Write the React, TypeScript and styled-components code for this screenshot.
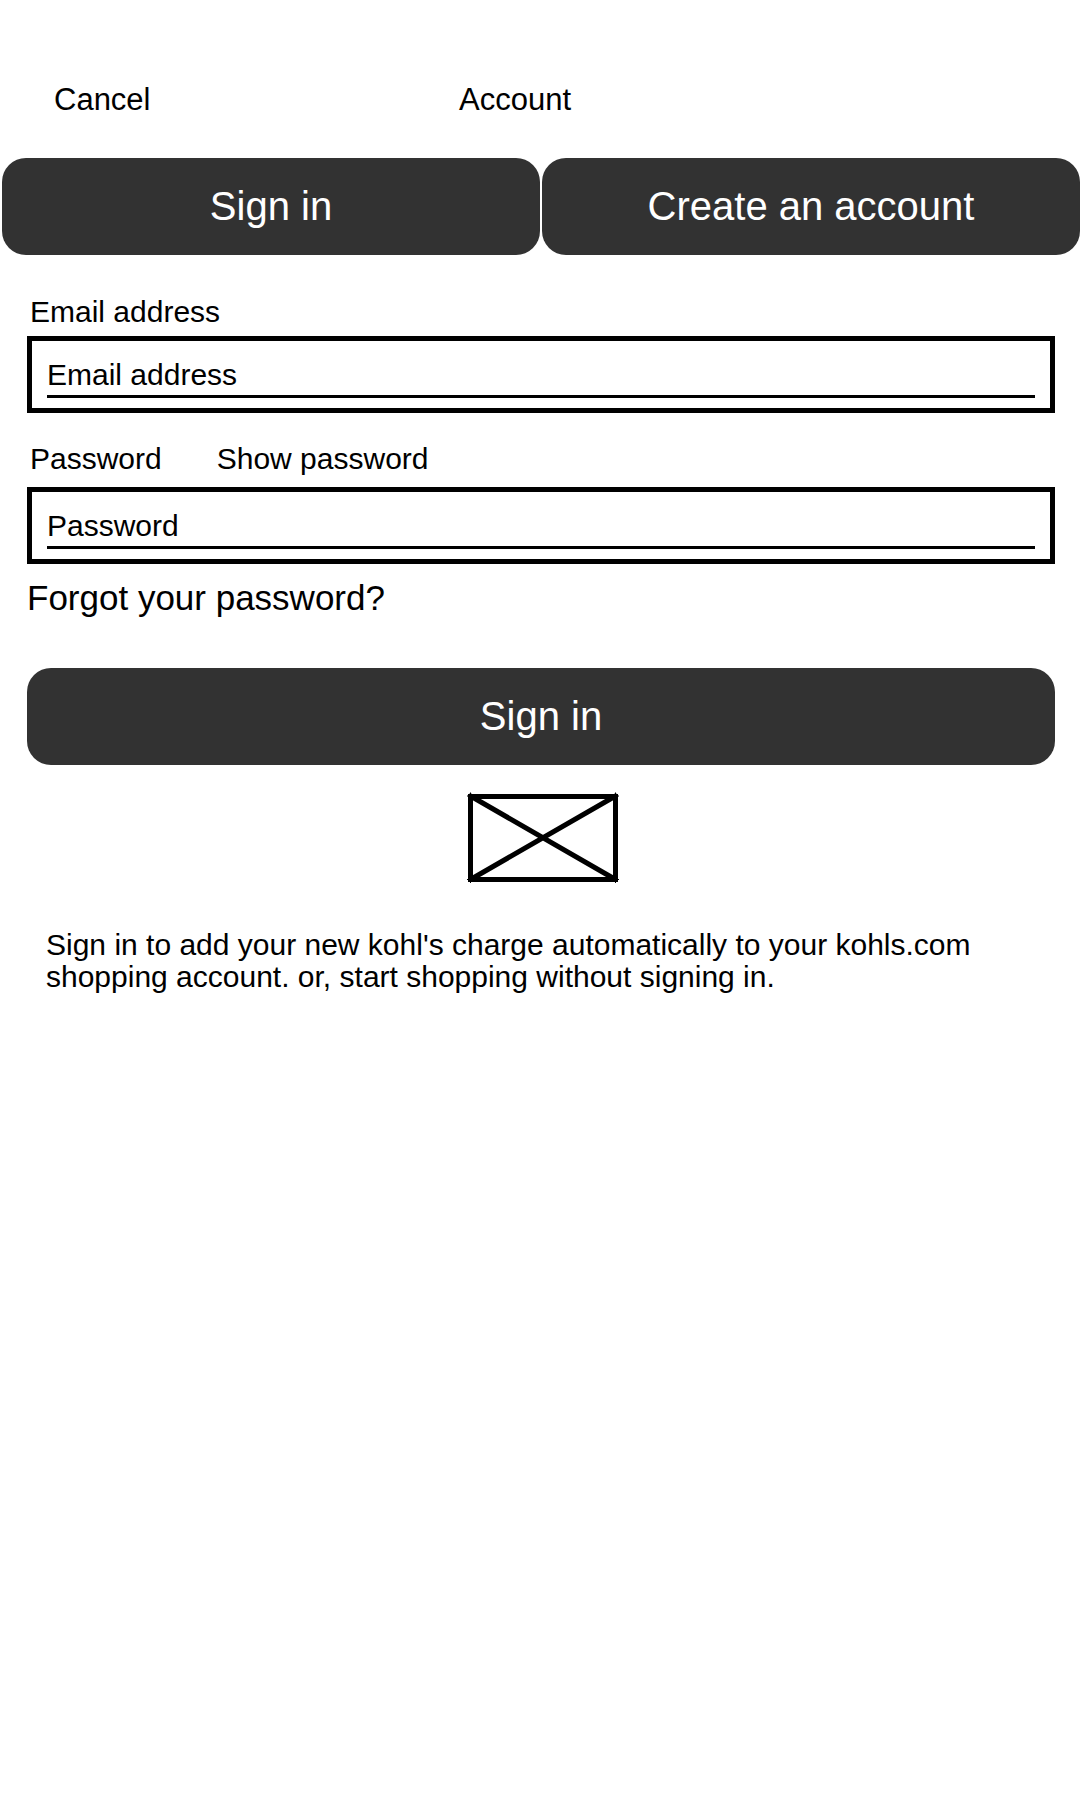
import React, { useState } from "react";
import styled, { createGlobalStyle } from "styled-components";

const GlobalStyle = createGlobalStyle`
  *, *::before, *::after {
    box-sizing: border-box;
  }
  body {
    margin: 0;
    background: #fff;
    color: #000;
    font-family: "Liberation Sans", Arial, sans-serif;
    font-size: 30px;
    line-height: 32px;
  }
  button, input {
    margin: 0;
    padding: 0;
    border: 0;
    border-radius: 0;
    background: none;
    color: inherit;
    font: inherit;
  }
  button {
    cursor: pointer;
  }
`;

const Header = styled.header`
  display: grid;
  grid-template-columns: 15fr 23fr;
  padding: 84px 0 42px 54px;
  font-size: 31px;
`;

const Title = styled.h1`
  margin: 0;
  font-size: inherit;
  font-weight: 400;
`;

const TextButton = styled.button`
  justify-self: start;
  text-align: left;
`;

const Tabs = styled.nav`
  display: grid;
  grid-template-columns: 1fr 1fr;
  gap: 2px;
  padding-left: 2px;
`;

const SolidButton = styled.button`
  width: 100%;
  height: 97px;
  padding-bottom: 2px;
  border-radius: 24px;
  background: #323232;
  color: #fff;
  font-size: 40px;
  line-height: 46px;
`;

const Form = styled.form`
  display: flex;
  flex-direction: column;
  padding: 41px 25px 0 27px;
`;

const Field = styled.div<{ $gap: number }>`
  display: flex;
  flex-direction: column;
  gap: ${({ $gap }) => $gap}px;

  & + & {
    margin-top: 30px;
  }
`;

const LabelRow = styled.div`
  display: flex;
  gap: 55px;
  padding-left: 3px;
`;

const InputFrame = styled.div`
  padding: 0 15px 10px;
  border: 5px solid #000;
`;

const Input = styled.input`
  display: block;
  width: 100%;
  height: 57px;
  padding-top: 14px;
  border-bottom: 3px solid #000;
  outline: none;

  &::placeholder {
    color: #000;
    opacity: 1;
  }
`;

const ForgotLink = styled.a`
  align-self: flex-start;
  margin: 14px 0 50px;
  color: inherit;
  font-size: 35px;
  line-height: 40px;
  text-decoration: none;
`;

const Picture = styled.svg`
  display: block;
  align-self: center;
  margin-top: 27px;
`;

const Note = styled.p`
  margin: 0;
  padding: 45px 24px 0 46px;
`;

export default function App() {
  const [visible, setVisible] = useState(false);

  return (
    <>
      <GlobalStyle />
      <Header>
        <TextButton type="button">Cancel</TextButton>
        <Title>Account</Title>
      </Header>
      <main>
        <Tabs>
          <SolidButton type="button">Sign in</SolidButton>
          <SolidButton type="button">Create an account</SolidButton>
        </Tabs>
        <Form onSubmit={(event) => event.preventDefault()}>
          <Field $gap={8}>
            <LabelRow>
              <label htmlFor="email">Email address</label>
            </LabelRow>
            <InputFrame>
              <Input id="email" type="email" placeholder="Email address" />
            </InputFrame>
          </Field>
          <Field $gap={12}>
            <LabelRow>
              <label htmlFor="password">Password</label>
              <TextButton type="button" aria-pressed={visible} onClick={() => setVisible(!visible)}>
                Show password
              </TextButton>
            </LabelRow>
            <InputFrame>
              <Input id="password" type={visible ? "text" : "password"} placeholder="Password" />
            </InputFrame>
          </Field>
          <ForgotLink href="#forgot">Forgot your password?</ForgotLink>
          <SolidButton type="submit">Sign in</SolidButton>
          <Picture width="156" height="92" viewBox="0 0 156 92" fill="none" stroke="#000" strokeWidth="5" overflow="visible" aria-hidden="true">
            <rect x="7.5" y="4.5" width="145" height="83" />
            <path d="M7.5 4 L152.5 87.5 M152.5 4 L7.5 87.5" strokeLinecap="round" />
            <path d="M4 4 H11 M7.5 0.5 V8 M149 4 H156 M152.5 0.5 V8 M4 87.5 H11 M7.5 84 V91 M149 87.5 H156 M152.5 84 V91" strokeWidth="1" />
          </Picture>
        </Form>
        <Note>
          Sign in to add your new kohl's charge automatically to your kohls.com shopping account. or, start shopping
          without signing in.
        </Note>
      </main>
    </>
  );
}
